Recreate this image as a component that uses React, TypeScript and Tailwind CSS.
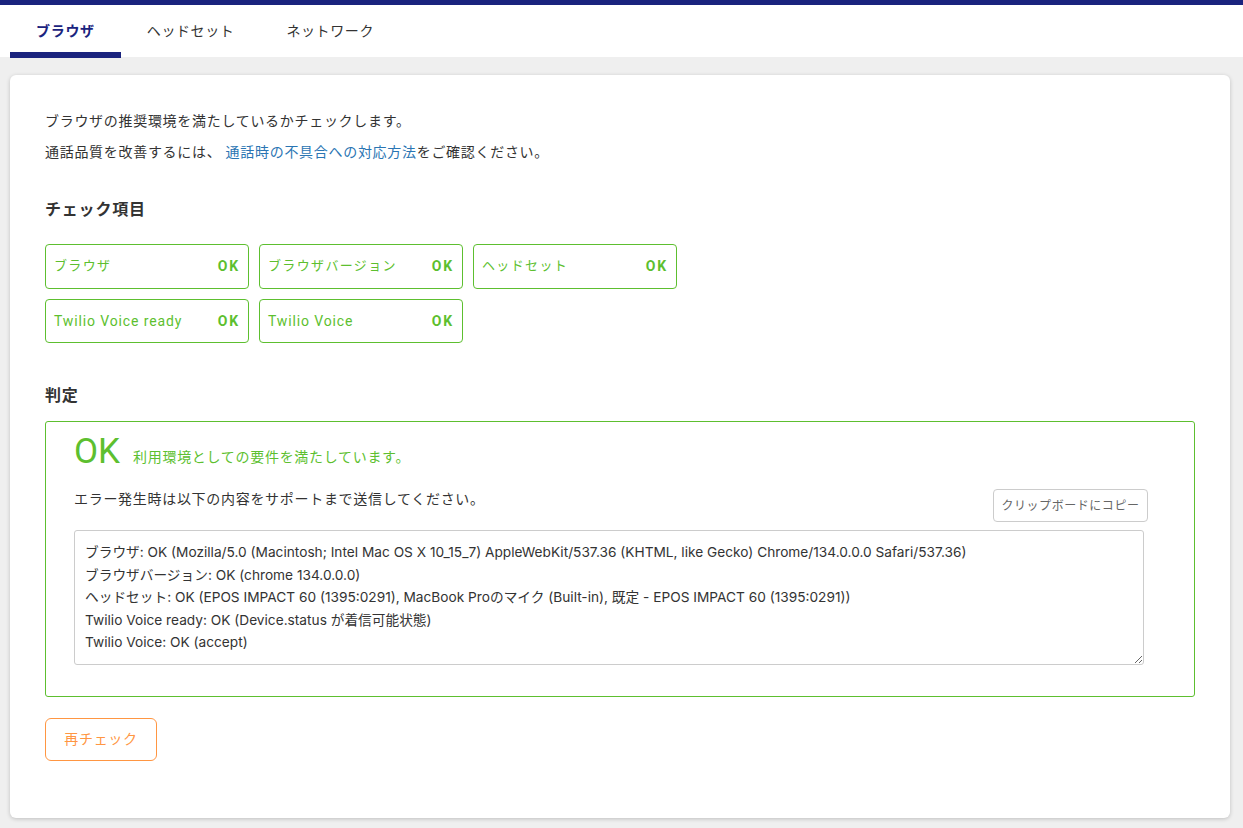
const checks = [
  { label: 'ブラウザ' },
  { label: 'ブラウザバージョン' },
  { label: 'ヘッドセット' },
  { label: 'Twilio Voice ready' },
  { label: 'Twilio Voice' },
];

const report = `ブラウザ: OK (Mozilla/5.0 (Macintosh; Intel Mac OS X 10_15_7) AppleWebKit/537.36 (KHTML, like Gecko) Chrome/134.0.0.0 Safari/537.36)
ブラウザバージョン: OK (chrome 134.0.0.0)
ヘッドセット: OK (EPOS IMPACT 60 (1395:0291), MacBook Proのマイク (Built-in), 既定 - EPOS IMPACT 60 (1395:0291))
Twilio Voice ready: OK (Device.status が着信可能状態)
Twilio Voice: OK (accept)`;

const tabs = ['ブラウザ', 'ヘッドセット', 'ネットワーク'];

export default function App() {
  return (
    <div className="min-h-[828px] bg-[#efefef] font-['Roboto','Noto_Sans_CJK_JP',sans-serif] text-[14px] tracking-[0.7px] text-[#333]">
      <header className="flex h-[57px] border-t-[5px] border-[#1a237e] bg-white pl-[10px]">
        {tabs.map((tab, i) => (
          <div
            key={tab}
            className={
              i === 0
                ? 'h-[53px] border-b-[6px] border-[#1a237e] px-[26px] pt-[17px] leading-[19px] font-bold text-[#1a237e]'
                : 'h-[53px] px-[26px] pt-[17px] leading-[19px] tracking-[0.6px]'
            }
          >
            {tab}
          </div>
        ))}
      </header>

      <main className="pr-[13px] pl-[10px] pt-[18px]">
        <div className="h-[743px] rounded-[6px] bg-white px-[35px] pt-[35px] shadow-[0_1px_4px_rgba(0,0,0,0.2)]">
          <p className="pt-[1px] leading-[20px]">ブラウザの推奨環境を満たしているかチェックします。</p>
          <p className="mt-[11px] leading-[20px]">
            通話品質を改善するには、 <a className="text-[#2a75b3]">通話時の不具合への対応方法</a>をご確認ください。
          </p>

          <h2 className="mt-[37px] text-[16px] leading-[22px] font-bold tracking-[0.8px]">チェック項目</h2>
          <div className="mt-[23px] grid w-[632px] grid-cols-3 gap-x-[10px] gap-y-[10px]">
            {checks.map((c, i) => (
              <div
                key={c.label}
                className={
                  i < 3
                    ? 'flex h-[45px] items-center justify-between rounded-[4px] border border-[#5dbf2f] px-[8px] text-[#5dbf2f]'
                    : 'flex h-[44px] items-center justify-between rounded-[4px] border border-[#5dbf2f] px-[8px] text-[#5dbf2f]'
                }
              >
                <span className={i < 3 ? 'pb-[2px] text-[13px] tracking-[1.35px]' : 'pt-[1px] tracking-[0.87px]'}>
                  {c.label}
                </span>
                <span className="font-bold tracking-[1.8px]">OK</span>
              </div>
            ))}
          </div>

          <h2 className="mt-[42px] text-[16px] leading-[22px] font-bold tracking-[0.8px]">判定</h2>
          <section className="mt-[14px] h-[276px] rounded-[3px] border border-[#5dbf2f] pl-[28px]">
            <div className="flex items-baseline pt-[9px] text-[#5dbf2f]">
              <span className="translate-y-[1px] text-[35px] leading-[40px] tracking-normal">OK</span>
              <span className="ml-[13px]">利用環境としての要件を満たしています。</span>
            </div>
            <div className="mt-[17px] flex w-[1074px] items-start justify-between">
              <p className="mt-[1px] leading-[20px]">エラー発生時は以下の内容をサポートまで送信してください。</p>
              <button className="mt-[1px] h-[33px] w-[155px] rounded-[4px] border border-[#ccc] bg-white text-[12px] tracking-[0.55px] text-[#666]">
                クリップボードにコピー
              </button>
            </div>
            <textarea
              readOnly
              value={report}
              className="mt-[8px] block h-[135px] w-[1070px] rounded-[3px] border border-[#ccc] px-[10px] py-[10px] font-['Inter','Noto_Sans_CJK_JP',sans-serif] text-[13.7px] leading-[22.5px] tracking-normal text-[#333]"
            />
          </section>

          <button className="mt-[21px] h-[43px] w-[112px] rounded-[6px] border border-[#ff9642] bg-white text-[#ff9642]">
            再チェック
          </button>
        </div>
      </main>
    </div>
  );
}
